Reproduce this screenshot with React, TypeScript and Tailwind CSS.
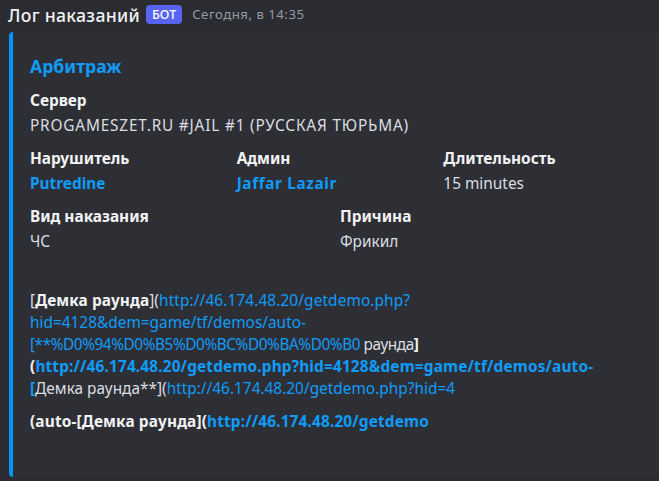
import React from "react";

const W = "text-[#dbdee1]";
const B = "text-[#0f9cfa]";

function Field({
  name,
  value,
  link,
  vClass = "",
}: {
  name: string;
  value: string;
  link?: boolean;
  vClass?: string;
}) {
  return (
    <div className="min-w-0">
      <div className="text-[15.4px] leading-[24px] font-bold text-[#f2f3f5]">{name}</div>
      <div className={`text-[15.4px] leading-[25px] ${link ? "font-bold " + B : W} ${vClass}`}>{value}</div>
    </div>
  );
}

export default function App() {
  return (
    <div
      className="w-[659px] h-[481px] overflow-hidden bg-[#2b2c31]"
      style={{ fontFamily: '"Noto Sans", "Open Sans", sans-serif' }}
    >
      <div className="flex items-center h-[28px] pl-[8px] pt-[1px]">
        <span className="text-[17.6px] font-medium text-[#f2f3f5] leading-[24px] tracking-[0.3px]">
          Лог наказаний
        </span>
        <span className="ml-[6px] h-[19px] px-[6px] rounded-[4px] bg-[#5865f2] text-white text-[12.5px] leading-[19px] font-medium">
          БОТ
        </span>
        <span className="ml-[10px] text-[13.2px] text-[#949ba4] tracking-[0.5px]">Сегодня, в 14:35</span>
      </div>
      <div className="ml-[9px] mt-[4px] h-[445px] border-l-[4px] border-[#0095ff] rounded-l-[4px] bg-[#2e2f35] pl-[17px] pt-[22px]">
        <div className="text-[17.6px] leading-[24px] font-bold text-[#0f9cfa]">Арбитраж</div>
        <div className="mt-[11px] w-[612px] grid grid-cols-6 gap-x-[8px] gap-y-[9px]">
          <div className="col-span-6">
            <Field
              name="Сервер"
              value="PROGAMESZET.RU #JAIL #1 (РУССКАЯ ТЮРЬМА)"
              vClass="tracking-[0.8px]"
            />
          </div>
          <div className="col-span-2">
            <Field name="Нарушитель" value="Putredine" link />
          </div>
          <div className="col-span-2">
            <Field name="Админ" value="Jaffar Lazair" link vClass="tracking-[0.6px]" />
          </div>
          <div className="col-span-2">
            <Field name="Длительность" value="15 minutes" />
          </div>
          <div className="col-span-3">
            <Field name="Вид наказания" value="ЧС" />
          </div>
          <div className="col-span-3">
            <Field name="Причина" value="Фрикил" />
          </div>
        </div>
        <div className="mt-[36px] text-[15.4px] leading-[22px] whitespace-nowrap">
          <div className="tracking-[0.1px]">
            <span className={W}>[</span>
            <span className="font-bold text-[#f2f3f5]">Демка раунда</span>
            <span className={W}>](</span>
            <span className={B}>http://46.174.48.20/getdemo.php?</span>
          </div>
          <div className={B}>hid=4128&amp;dem=game/tf/demos/auto-</div>
          <div className="tracking-[-0.45px]">
            <span className={B}>[**%D0%94%D0%B5%D0%BC%D0%BA%D0%B0</span>
            <span className={W}> раунда</span>
            <span className="font-bold text-[#f2f3f5]">]</span>
          </div>
          <div className="font-bold tracking-[0.15px]">
            <span className="text-[#f2f3f5]">(</span>
            <span className={B}>http://46.174.48.20/getdemo.php?hid=4128&amp;dem=game/tf/demos/auto-</span>
          </div>
          <div>
            <span className={"font-bold " + B}>[</span>
            <span className={W}>Демка раунда**](</span>
            <span className={B}>http://46.174.48.20/getdemo.php?hid=4</span>
          </div>
          <div className="mt-[11px] font-bold tracking-[0.15px]">
            <span className="text-[#f2f3f5]">(auto-[Демка раунда](</span>
            <span className={B}>http://46.174.48.20/getdemo</span>
          </div>
        </div>
      </div>
    </div>
  );
}
